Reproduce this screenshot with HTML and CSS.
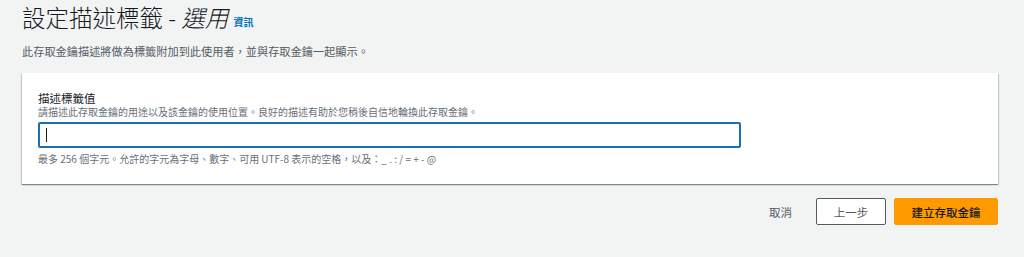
FILE: index.html
```html
<!DOCTYPE html>
<html lang="zh-Hant">
<head>
    <meta charset="UTF-8">
    <meta name="viewport" content="width=device-width, initial-scale=1.0">
    <title>設定描述標籤</title>
    <link rel="stylesheet" href="styles.css">
</head>
<body>

<div class="page">
    <!-- Page header -->
    <div class="page-header">
        <h1 class="title">設定描述標籤 - <em>選用</em> <a class="info" href="#">資訊</a></h1>
        <p class="subtitle">此存取金鑰描述將做為標籤附加到此使用者，並與存取金鑰一起顯示。</p>
    </div>

    <!-- Form card -->
    <div class="card">
        <label class="field-label" for="desc">描述標籤值</label>
        <div class="field-desc">請描述此存取金鑰的用途以及該金鑰的使用位置。良好的描述有助於您稍後自信地輪換此存取金鑰。</div>
        <div class="input-box"><span class="caret"></span></div>
        <div class="field-hint">最多 256 個字元。允許的字元為字母、數字、可用 UTF-8 表示的空格，以及：_ . : / = + - @</div>
    </div>

    <!-- Actions -->
    <div class="actions">
        <button class="btn-link">取消</button>
        <button class="btn-normal">上一步</button>
        <button class="btn-primary">建立存取金鑰</button>
    </div>
</div>

</body>
</html>
```

FILE: styles.css
```css
body {
    margin: 0;
    background: #f2f3f3;
    font-family: "Noto Sans CJK TC", "Noto Sans", "Liberation Sans", sans-serif;
    color: #16191f;
}
.page {
    padding: 0 26px 0 22px;
}
.page-header {
    padding-top: 2px;
}
.title {
    margin: 0;
    font-size: 23.5px;
    font-weight: 300;
    line-height: 30px;
    color: #16191f;
}
.title em {
    font-style: italic;
}
.info {
    font-size: 10px;
    font-weight: 700;
    color: #0073bb;
    text-decoration: none;
    vertical-align: 1px;
}
.subtitle {
    margin: 6px 0 0;
    font-size: 11.2px;
    line-height: 16px;
    color: #545b64;
}
.card {
    margin-top: 14px;
    background: #fff;
    box-shadow: 0 1px 1px 0 rgba(0, 28, 36, 0.3), 1px 1px 1px 0 rgba(0, 28, 36, 0.15), -1px 1px 1px 0 rgba(0, 28, 36, 0.15);
    padding: 16px 16px 16px 16px;
    height: 111px;
    box-sizing: border-box;
}
.field-label {
    display: block;
    margin-top: 2px;
    font-size: 11.5px;
    line-height: 14px;
    color: #16191f;
}
.field-desc {
    font-size: 10px;
    line-height: 13px;
    color: #687078;
}
.input-box {
    margin-top: 4px;
    width: 703px;
    height: 26px;
    box-sizing: border-box;
    border: 2px solid #1a6fb5;
    border-radius: 2px;
    display: flex;
    align-items: center;
    padding-left: 6px;
}
.caret {
    width: 1px;
    height: 14px;
    background: #16191f;
}
.field-hint {
    margin-top: 4px;
    font-size: 10px;
    line-height: 14px;
    color: #687078;
}
.actions {
    display: flex;
    justify-content: flex-end;
    align-items: center;
    margin-top: 14px;
    gap: 8px;
}
.actions button {
    font-family: inherit;
    font-size: 11.5px;
    height: 27px;
    border-radius: 2px;
    cursor: pointer;
}
.btn-link {
    background: none;
    border: none;
    color: #545b64;
    padding: 0 16px;
}
.btn-normal {
    background: #fff;
    border: 1px solid #545b64;
    color: #545b64;
    width: 70px;
}
.btn-primary {
    background: #ff9900;
    border: 1px solid #ff9900;
    color: #16191f;
    font-weight: 500;
    width: 104px;
}
```
